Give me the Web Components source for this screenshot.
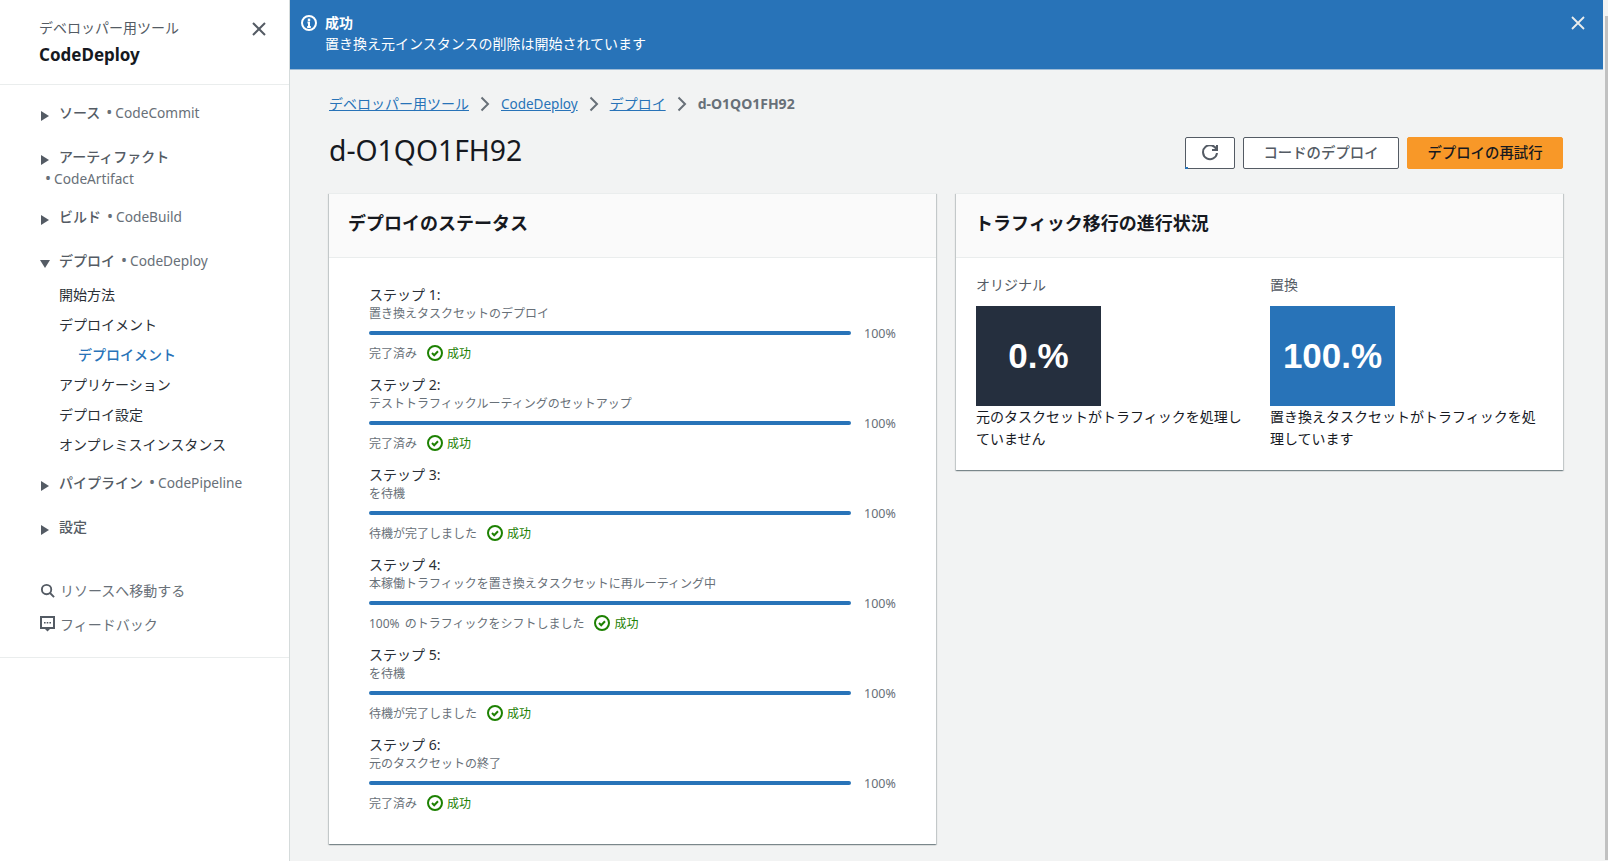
<!DOCTYPE html>
<html lang="ja">
<head>
<meta charset="utf-8">
<title>d-O1QO1FH92</title>
<style>
  html, body { margin: 0; height: 100%; overflow: hidden; }
  body { font-family: "Noto Sans", "Noto Sans CJK JP", sans-serif; font-size: 14px; color: #16191f; background: #f2f3f3; }
</style>
</head>
<body>
<app-shell>
  <side-nav slot="nav">
    <nav-section label="ソース" service="CodeCommit"></nav-section>
    <nav-section label="アーティファクト" service="CodeArtifact" wrap></nav-section>
    <nav-section label="ビルド" service="CodeBuild"></nav-section>
    <nav-section label="デプロイ" service="CodeDeploy" open>
      <nav-link>開始方法</nav-link>
      <nav-link>デプロイメント</nav-link>
      <nav-link sub active>デプロイメント</nav-link>
      <nav-link>アプリケーション</nav-link>
      <nav-link>デプロイ設定</nav-link>
      <nav-link>オンプレミスインスタンス</nav-link>
    </nav-section>
    <nav-section label="パイプライン" service="CodePipeline"></nav-section>
    <nav-section label="設定"></nav-section>
  </side-nav>
  <flash-bar slot="flash" heading="成功">置き換え元インスタンスの削除は開始されています</flash-bar>
  <page-head slot="content" heading="d-O1QO1FH92"></page-head>
  <div slot="content" class="cards" style="display:grid;grid-template-columns:607px 607px;column-gap:20px;align-items:start">
    <info-card heading="デプロイのステータス">
      <div style="padding:27px 40px 31px">
        <deploy-step step="1" desc="置き換えタスクセットのデプロイ" note="完了済み"></deploy-step>
        <deploy-step step="2" desc="テストトラフィックルーティングのセットアップ" note="完了済み"></deploy-step>
        <deploy-step step="3" desc="を待機" note="待機が完了しました"></deploy-step>
        <deploy-step step="4" desc="本稼働トラフィックを置き換えタスクセットに再ルーティング中" note="100% のトラフィックをシフトしました"></deploy-step>
        <deploy-step step="5" desc="を待機" note="待機が完了しました"></deploy-step>
        <deploy-step step="6" desc="元のタスクセットの終了" note="完了済み"></deploy-step>
      </div>
    </info-card>
    <info-card heading="トラフィック移行の進行状況">
      <div style="display:grid;grid-template-columns:274px 274px;column-gap:20px;padding:16px 20px 20px">
        <traffic-box label="オリジナル" value="0.%" color="#252f3e">元のタスクセットがトラフィックを処理していません</traffic-box>
        <traffic-box label="置換" value="100.%" color="#2873b8">置き換えタスクセットがトラフィックを処理しています</traffic-box>
      </div>
    </info-card>
  </div>
</app-shell>

<script>
const ICONS = {
  close: '<path d="M2 2l12 12M14 2L2 14"/>',
  info: '<circle cx="8" cy="8" r="7"/><path d="M8 12V7.5H6.5M6.2 12h3.6"/><path d="M7.4 4.2h1.2v1.2H7.4z" stroke-width="1.2"/>',
  check: '<circle cx="8" cy="8" r="7"/><path d="M5 8l2.2 2.2L11 6.2"/>',
  refresh: '<path d="M10 5h5V0"/><path d="M15 8a7 7 0 1 1-.29-3"/>',
  search: '<circle cx="7" cy="7" r="5"/><path d="M10.7 10.7L15 15"/>'
};

function icon(name, size, color, weight) {
  return `<svg width="${size}" height="${size}" viewBox="0 0 16 16" fill="none" stroke="${color}" stroke-width="${weight || 2}" style="display:block;flex:none">${ICONS[name]}</svg>`;
}

function shadow(el, html) {
  el.attachShadow({ mode: 'open' }).innerHTML = html;
}

class AppShell extends HTMLElement {
  connectedCallback() {
    shadow(this, `
      <style>
        :host { display: flex; height: 861px; width: 1608px; }
        .main { flex: 1; min-width: 0; display: flex; flex-direction: column; }
        .content { padding: 23px 40px 0 39px; }
        .scroll { width: 5px; flex: none; padding: 16px 0 1px 2px; box-sizing: border-box; }
        .thumb { height: 100%; background: #c1c1c1; }
      </style>
      <slot name="nav"></slot>
      <div class="main">
        <slot name="flash"></slot>
        <div class="content"><slot name="content"></slot></div>
      </div>
      <div class="scroll"><div class="thumb"></div></div>`);
  }
}

class SideNav extends HTMLElement {
  connectedCallback() {
    shadow(this, `
      <style>
        :host { display: block; width: 289px; flex: none; background: #fff; border-right: 1px solid #d5dbdb; box-sizing: content-box; }
        .top { height: 85px; box-sizing: border-box; border-bottom: 1px solid #eaeded; padding: 17px 0 0 39px; position: relative; }
        .tool { font-size: 14px; line-height: 22px; color: #545b64; }
        .name { font-size: 17px; line-height: 24px; font-weight: 700; margin-top: 4px; color: #16191f; }
        .x { position: absolute; left: 251px; top: 21px; }
        .list { padding: 6px 0 0; }
        .extra { margin-top: 24px; padding: 0 0 16px 40px; border-bottom: 1px solid #eaeded; }
        .extra div { display: flex; align-items: center; gap: 5px; height: 34px; color: #687078; font-size: 14px; }
      </style>
      <div class="top">
        <div class="tool">デベロッパー用ツール</div>
        <div class="name">CodeDeploy</div>
        <div class="x">${icon('close', 16, '#545b64')}</div>
      </div>
      <div class="list"><slot></slot></div>
      <div class="extra">
        <div>${icon('search', 15, '#545b64')}<span>リソースへ移動する</span></div>
        <div>
          <svg width="15" height="16" viewBox="0 0 15 16" style="display:block;flex:none"><path d="M1 1h13v11H1z" fill="none" stroke="#545b64" stroke-width="2"/><path d="M5 13h5l-2.500 2.500z" fill="#545b64"/><path d="M4 6h1.600v1.600H4zM6.700 6h1.600v1.600H6.700zM9.400 6H11v1.600H9.400z" fill="#545b64"/></svg>
          <span>フィードバック</span>
        </div>
      </div>`);
  }
}

class NavSection extends HTMLElement {
  connectedCallback() {
    const open = this.hasAttribute('open');
    const wrap = this.hasAttribute('wrap');
    const service = this.getAttribute('service');
    const arrow = open
      ? '<svg class="tri down" width="10" height="8" viewBox="0 0 10 8"><path d="M0 0h10L5 8z" fill="#545b64"/></svg>'
      : '<svg class="tri" width="8" height="10" viewBox="0 0 8 10"><path d="M0 0l8 5-8 5z" fill="#545b64"/></svg>';
    shadow(this, `
      <style>
        :host { display: block; }
        .head { height: 22px; padding: 11px 0 11px 41px; line-height: 22px; font-size: 14px; font-weight: 500; color: #545b64; white-space: nowrap; position: relative; }
        .wrap { height: 44px; }
        .tri { display: inline-block; margin-right: 10px; vertical-align: -3px; }
        .tri.down { margin: 0 9px 0 -1px; vertical-align: -2px; }
        .svc { font-size: 13.700px; font-weight: 400; color: #687078; line-height: 22px; }
        .dot { font-size: 16px; line-height: 0; margin: 0 3px 0 6px; }
        .wrap .dot { margin-left: 4px; }
        :host([wrap]) .head { margin-bottom: -6px; }
        :host([open]) .head { margin-bottom: -3px; }
        :host([open]) .sub { padding-bottom: 1px; }
      </style>
      <div class="head ${wrap ? 'wrap' : ''}">${arrow}${this.getAttribute('label')}${service ? `<span class="svc">${wrap ? '<br>' : ''}<span class="dot">•</span>${service}</span>` : ''}</div>
      <div class="sub"><slot></slot></div>`);
  }
}

class NavLink extends HTMLElement {
  connectedCallback() {
    shadow(this, `
      <style>
        :host { display: block; height: 30px; line-height: 30px; padding-left: 59px; font-size: 14px; color: #2a2f36; }
        :host([sub]) { padding-left: 78px; }
        :host([active]) { color: #2873b8; font-weight: 500; }
      </style>
      <slot></slot>`);
  }
}

class FlashBar extends HTMLElement {
  connectedCallback() {
    shadow(this, `
      <style>
        :host { display: block; height: 70px; box-sizing: border-box; background: #2873b8; color: #fff; position: relative; padding: 12px 0 0 11px; border-bottom: 1px solid #9fbcd6; }
        .row { display: flex; gap: 8px; }
        .ic { margin-top: 3px; }
        .t { font-weight: 700; line-height: 22px; font-size: 14px; }
        .m { line-height: 22px; font-size: 14px; margin-top: -1px; }
        .x { position: absolute; right: 17px; top: 15px; }
      </style>
      <div class="row">
        <div class="ic">${icon('info', 16, '#fff')}</div>
        <div><div class="t">${this.getAttribute('heading')}</div><div class="m"><slot></slot></div></div>
      </div>
      <div class="x">${icon('close', 16, '#eaeded', 1.8)}</div>`);
  }
}

class PageHead extends HTMLElement {
  connectedCallback() {
    const chev = '<svg class="chev" width="10" height="16" viewBox="0 0 10 16"><path d="M1.500 1.500L8 8l-6.500 6.500" fill="none" stroke="#687078" stroke-width="2"/></svg>';
    shadow(this, `
      <style>
        :host { display: block; margin-bottom: 23px; }
        .crumbs { display: flex; align-items: center; gap: 11px; line-height: 22px; font-size: 14px; }
        a { color: #2873b8; text-decoration: underline; }
        a.lat { font-size: 13.500px; }
        b { color: #687078; font-weight: 700; }
        .chev { display: block; flex: none; }
        .row { display: flex; justify-content: space-between; align-items: center; height: 35px; margin-top: 20px; }
        h1 { margin: 0 0 6px; font-size: 28.300px; line-height: 34px; font-weight: 400; color: #16191f; }
        .btns { display: flex; gap: 8px; }
        .btn { box-sizing: border-box; height: 32px; width: 156px; padding-bottom: 2px; display: flex; align-items: center; justify-content: center; border: 1px solid #545b64; border-radius: 2px; background: #fff; color: #545b64; font-size: 14.400px; font-weight: 500; }
        .btn.icon { width: 50px; position: relative; padding-bottom: 0; }
        .btn.icon::after { content: ""; position: absolute; left: -1px; bottom: -1px; width: 3px; height: 2px; background: #2873b8; }
        .btn.primary { background: #f89828; border-color: #f89828; color: #16191f; }
      </style>
      <div class="crumbs">
        <a>デベロッパー用ツール</a>${chev}<a class="lat">CodeDeploy</a>${chev}<a>デプロイ</a>${chev}<b>d-O1QO1FH92</b>
      </div>
      <div class="row">
        <h1>${this.getAttribute('heading')}</h1>
        <div class="btns">
          <div class="btn icon">${icon('refresh', 16, '#545b64')}</div>
          <div class="btn">コードのデプロイ</div>
          <div class="btn primary">デプロイの再試行</div>
        </div>
      </div>`);
  }
}

class InfoCard extends HTMLElement {
  connectedCallback() {
    shadow(this, `
      <style>
        :host { display: block; background: #fff; box-shadow: 0 1px 1px 0 rgba(0,28,36,.3), 1px 1px 1px 0 rgba(0,28,36,.15), -1px 1px 1px 0 rgba(0,28,36,.15); border-top: 1px solid #eaeded; }
        .head { box-sizing: border-box; background: #fafafa; border-bottom: 1px solid #eaeded; height: 64px; padding: 0 0 8px 19px; display: flex; align-items: center; }
        h2 { margin: 0; font-size: 18px; font-weight: 700; color: #16191f; }
      </style>
      <div class="head"><h2>${this.getAttribute('heading')}</h2></div>
      <slot></slot>`);
  }
}

class DeployStep extends HTMLElement {
  connectedCallback() {
    shadow(this, `
      <style>
        :host { display: block; margin-bottom: 12px; }
        :host(:last-child) { margin-bottom: 0; }
        .title { font-size: 14px; line-height: 20px; color: #2a2f36; }
        .desc { font-size: 12px; line-height: 18px; color: #687078; }
        .prog { display: flex; align-items: center; gap: 13px; height: 20px; font-size: 12.500px; color: #687078; }
        .bar { width: 482px; height: 4px; border-radius: 2px; background: #2873b8; }
        .status { display: flex; align-items: center; height: 20px; font-size: 12px; color: #687078; }
        .note { word-spacing: 2px; }
        .ok { display: flex; align-items: center; gap: 4px; margin-left: 10px; color: #1d8102; }
      </style>
      <div class="title">ステップ ${this.getAttribute('step')}:</div>
      <div class="desc">${this.getAttribute('desc')}</div>
      <div class="prog"><div class="bar"></div><span>100%</span></div>
      <div class="status"><span class="note">${this.getAttribute('note')}</span><span class="ok">${icon('check', 16, '#1d8102')}成功</span></div>`);
  }
}

class TrafficBox extends HTMLElement {
  connectedCallback() {
    shadow(this, `
      <style>
        :host { display: block; }
        .label { font-size: 14px; line-height: 22px; color: #545b64; }
        .box { width: 125px; height: 100px; margin-top: 10px; display: flex; align-items: center; justify-content: center; color: #fff; font: 700 35px "Liberation Sans", sans-serif; }
        .text { font-size: 14px; line-height: 22px; color: #16191f; }
      </style>
      <div class="label">${this.getAttribute('label')}</div>
      <div class="box" style="background:${this.getAttribute('color')}">${this.getAttribute('value')}</div>
      <div class="text"><slot></slot></div>`);
  }
}

customElements.define('app-shell', AppShell);
customElements.define('side-nav', SideNav);
customElements.define('nav-section', NavSection);
customElements.define('nav-link', NavLink);
customElements.define('flash-bar', FlashBar);
customElements.define('page-head', PageHead);
customElements.define('info-card', InfoCard);
customElements.define('deploy-step', DeployStep);
customElements.define('traffic-box', TrafficBox);
</script>
</body>
</html>
